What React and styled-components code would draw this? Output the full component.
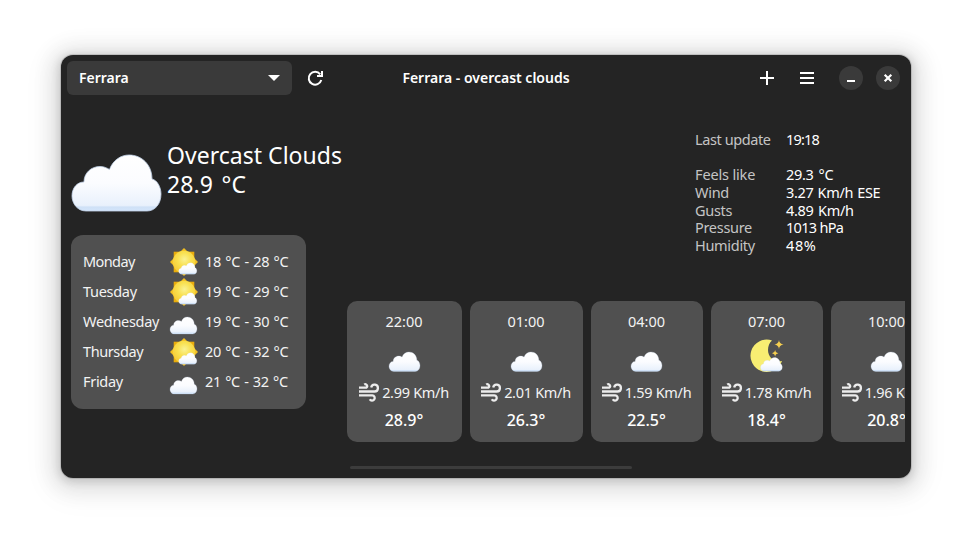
import React, { useId } from "react";
import styled, { createGlobalStyle } from "styled-components";

const GlobalStyle = createGlobalStyle`
  * { box-sizing: border-box; }
  body {
    margin: 0;
    background: #fff;
    font-family: "Noto Sans", "Open Sans", sans-serif;
    font-size: 14.5px;
    color: #fff;
  }
`;

const Desktop = styled.main`
  width: 972px;
  height: 545px;
  padding: 55px 61px 67px;
  overflow: hidden;
`;

const Window = styled.section`
  width: 850px;
  height: 423px;
  border-radius: 12px;
  background: #242424;
  box-shadow: 0 0 0 1px rgba(0, 0, 0, 0.12), 0 2px 8px 2px rgba(0, 0, 0, 0.13),
    0 3px 20px 10px rgba(0, 0, 0, 0.09), 0 6px 30px 14px rgba(0, 0, 0, 0.04);
`;

const Text = styled.span`
  white-space: nowrap;
  letter-spacing: ${(p) => p.$track ?? -0.3}px;
  word-spacing: ${(p) => p.$word ?? 0}px;
`;

const Header = styled.header`
  height: 46px;
  padding: 6px 11px 6px 6px;
  display: grid;
  grid-template-columns: 1fr auto 1fr;
  align-items: center;
  font-weight: 600;
  font-size: 14px;
  span { margin-bottom: 2px; }
`;

const Title = styled(Text)`
  margin-left: 5px;
`;

const HeaderStart = styled.div`
  display: flex;
  align-items: center;
  gap: 15px;
`;

const HeaderEnd = styled.div`
  display: flex;
  align-items: center;
  justify-content: flex-end;
`;

const CityButton = styled.button`
  width: 225px;
  height: 34px;
  padding: 0 12px;
  border: 0;
  border-radius: 6px;
  background: #3a3a3a;
  color: inherit;
  font: inherit;
  display: flex;
  align-items: center;
  justify-content: space-between;
`;

const IconButton = styled.button`
  width: ${(p) => p.$size}px;
  height: ${(p) => p.$size}px;
  margin-left: ${(p) => p.$gap ?? 0}px;
  padding: 0;
  border: 0;
  border-radius: 50%;
  background: ${(p) => (p.$filled ? "#3a3a3a" : "transparent")};
  color: #fff;
  display: grid;
  place-items: center;
`;

const Icon = styled.svg`
  display: block;
  flex: none;
  overflow: visible;
`;

const Body = styled.div`
  height: 377px;
  padding: 0 6px 9px 10px;
  display: flex;
  gap: 41px;
`;

const LeftColumn = styled.div`
  width: 235px;
  flex: none;
`;

const RightColumn = styled.div`
  width: 558px;
  display: flex;
  flex-direction: column;
`;

const Current = styled.div`
  height: 134px;
  padding: 40px 0 0 1px;
  display: flex;
  gap: 6px;
  svg { margin-top: 13.5px; }
`;

const CurrentText = styled.div`
  display: flex;
  flex-direction: column;
  font-size: 23px;
  line-height: 29px;
`;

const DailyCard = styled.div`
  height: 174px;
  padding: 12px;
  border-radius: 12px;
  background: #505050;
  color: #f3f3f3;
`;

const DayRow = styled.div`
  height: 30px;
  display: grid;
  grid-template-columns: 87px 35px 1fr;
  align-items: center;
  span { margin-bottom: 2px; }
`;

const DayIcon = styled.div`
  padding-top: ${(p) => (p.$low ? 7 : 0)}px;
`;

const Details = styled.dl`
  width: 210px;
  height: 200px;
  margin: 0;
  padding-top: 30px;
  align-self: flex-end;
`;

const Detail = styled.div`
  display: grid;
  grid-template-columns: 91px 1fr;
  height: 17.7px;
  line-height: 17.7px;
  margin-bottom: ${(p) => (p.$spaced ? 17.5 : 0)}px;
  dt { color: #c4c4c4; }
  dd { margin: 0; }
`;

const Hours = styled.div`
  display: flex;
  gap: 8px;
  overflow: hidden;
`;

const HourCard = styled.article`
  flex: none;
  width: ${(p) => p.$width}px;
  height: 141px;
  padding: 10px 1px 0 0;
  border-radius: 10px;
  background: #505050;
  color: #f3f3f3;
  display: grid;
  grid-template-rows: 20px 47px 27px 29px;
  place-items: center;
`;

const HourIcon = styled.div`
  padding-top: ${(p) => (p.$low ? 14 : 2)}px;
`;

const WindRow = styled.div`
  display: flex;
  align-items: center;
  gap: 3px;
  svg { margin-top: 1px; }
`;

const HourTemp = styled(Text)`
  font-size: 16px;
  font-weight: 500;
  color: #fff;
`;

const ScrollThumb = styled.div`
  width: 282px;
  height: 3px;
  margin: 24px 0 0 3px;
  border-radius: 2px;
  background: #3c3c3c;
`;

const CLOUD =
  "M14 56 C5 56 0 48 0 41 C0 33 5 27 12 27 C12 18 19 11.5 28 11.5 C32 11.5 35 13 37.5 14.5 C41 5 49 0 57 0 C70 0 80 10 80 24 C85 25 89 32 89 39 C89 49 83 56 75 56 Z";

function CloudShape({ id }) {
  return (
    <>
      <defs>
        <linearGradient id={id} x1="0" y1="0" x2="0" y2="1">
          <stop offset="0" stopColor="#ffffff" />
          <stop offset="0.5" stopColor="#fbfcff" />
          <stop offset="0.9" stopColor="#e9f1fc" />
          <stop offset="0.93" stopColor="#cfe1f7" />
          <stop offset="1" stopColor="#d3e5fa" />
        </linearGradient>
      </defs>
      <path d={CLOUD} fill={`url(#${id})`} stroke="#c3d3ea" strokeWidth="0.8" />
    </>
  );
}

function Cloud({ width }) {
  const id = useId();
  return (
    <Icon width={width} height={(width * 57) / 89} viewBox="0 0 89 57">
      <CloudShape id={id} />
    </Icon>
  );
}

function PartlyCloudy() {
  const id = useId();
  return (
    <Icon width="28" height="28" viewBox="0 0 28 28">
      <defs>
        <radialGradient id={`${id}s`} cx="0.52" cy="0.38" r="0.6">
          <stop offset="0" stopColor="#faf294" />
          <stop offset="0.5" stopColor="#f9e04f" />
          <stop offset="1" stopColor="#f5cc38" />
        </radialGradient>
      </defs>
      <rect x="3.7" y="3.7" width="20.6" height="20.6" fill="#e9ac0c" />
      <path d="M14 0 L28 14 L14 28 L0 14Z" fill="#f3bf20" />
      <circle cx="14" cy="14" r="11.3" fill={`url(#${id}s)`} />
      <g transform="translate(8.7 14.8) scale(.204)">
        <CloudShape id={`${id}c`} />
      </g>
    </Icon>
  );
}

function CloudyNight() {
  const id = useId();
  return (
    <Icon width="34" height="34" viewBox="0 0 34 34">
      <path d="M22 1.4 A16.2 16.2 0 1 0 32 22 C24 24 18 18 18 11 C18 7 19.5 3.5 22 1.4Z" fill="#f8ee72" />
      <path d="M29 1 Q29.3 5 33.5 5.4 Q29.3 6 29 10 Q28.5 6 24.5 5.4 Q28.5 5 29 1Z" fill="#f5cf50" />
      <path d="M25.2 11 Q25.5 13.8 28.4 14.2 Q25.5 14.7 25.2 17.6 Q24.8 14.7 22 14.2 Q24.8 13.8 25.2 11Z" fill="#f5cf50" />
      <g transform="translate(10.5 18.5) scale(.245)">
        <CloudShape id={id} />
      </g>
    </Icon>
  );
}

function WindIcon() {
  return (
    <Icon width="20" height="19" viewBox="0 0 20 19" fill="none" stroke="#ececec" strokeWidth="2.3">
      <path d="M0 4.7 H7.2 A1.8 1.8 0 1 0 5.2 1.5" />
      <path d="M0 8.5 H15.5 A3.4 3.4 0 1 0 12.2 4.4" />
      <path d="M0 12.4 H13.3 A2.6 2.6 0 1 1 10.8 16.2" />
    </Icon>
  );
}

const DAYS = [
  { name: "Monday", track: -0.6, Pic: PartlyCloudy, temps: "18 °C - 28 °C" },
  { name: "Tuesday", Pic: PartlyCloudy, temps: "19 °C - 29 °C" },
  { name: "Wednesday", temps: "19 °C - 30 °C" },
  { name: "Thursday", track: -0.4, Pic: PartlyCloudy, temps: "20 °C - 32 °C" },
  { name: "Friday", temps: "21 °C - 32 °C", tempTrack: -0.35 },
];

const DETAILS = [
  { label: "Last update", labelTrack: -0.4, value: "19:18", track: -0.8, spaced: true },
  { label: "Feels like", labelTrack: -0.15, value: "29.3 °C", word: 1.5 },
  { label: "Wind", value: "3.27 Km/h ESE", word: 0.5 },
  { label: "Gusts", value: "4.89 Km/h", word: 1 },
  { label: "Pressure", value: "1013 hPa", track: -0.7 },
  { label: "Humidity", value: "48%", track: 0.6 },
];

const HOURS = [
  { time: "22:00", wind: "2.99 Km/h", temp: "28.9°", width: 115 },
  { time: "01:00", wind: "2.01 Km/h", temp: "26.3°", width: 113 },
  { time: "04:00", wind: "1.59 Km/h", temp: "22.5°", width: 112 },
  { time: "07:00", wind: "1.78 Km/h", temp: "18.4°", width: 112, night: true },
  { time: "10:00", wind: "1.96 Km/h", temp: "20.8°", width: 112 },
];

export default function App() {
  return (
    <Desktop>
      <GlobalStyle />
      <Window>
        <Header>
          <HeaderStart>
            <CityButton>
              <Text $track={0}>Ferrara</Text>
              <Icon width="12" height="6" viewBox="0 0 12 6">
                <path d="M0 0H12L6 6Z" fill="#fff" />
              </Icon>
            </CityButton>
            <IconButton $size={16} aria-label="Refresh">
              <Icon width="16" height="16" viewBox="0 0 16 16" fill="none" stroke="#fff" strokeWidth="2">
                <path d="M13.2 4.3 A6.4 6.4 0 1 0 14.3 10" />
                <path d="M15 1 V6 H10" />
              </Icon>
            </IconButton>
          </HeaderStart>
          <Title $track={0}>Ferrara - overcast clouds</Title>
          <HeaderEnd>
            <IconButton $size={14} aria-label="Add city">
              <Icon width="14" height="14" viewBox="0 0 14 14">
                <path d="M6 0h2v6h6v2H8v6H6V8H0V6h6z" fill="#fff" />
              </Icon>
            </IconButton>
            <IconButton $size={14} $gap={26} aria-label="Menu">
              <Icon width="14" height="12" viewBox="0 0 14 12">
                <path d="M0 0h14v2H0zM0 5h14v2H0zM0 10h14v2H0z" fill="#fff" />
              </Icon>
            </IconButton>
            <IconButton $size={24} $gap={25} $filled aria-label="Minimize">
              <Icon width="8" height="8" viewBox="0 0 8 8">
                <path d="M0 6h8v2H0z" fill="#fff" />
              </Icon>
            </IconButton>
            <IconButton $size={24} $gap={13} $filled aria-label="Close">
              <Icon width="8" height="8" viewBox="0 0 8 8">
                <path d="M.7 .7L7.3 7.3M7.3 .7L.7 7.3" stroke="#fff" strokeWidth="2.2" />
              </Icon>
            </IconButton>
          </HeaderEnd>
        </Header>
        <Body>
          <LeftColumn>
            <Current>
              <Cloud width={89} />
              <CurrentText>
                <Text $track={0.02}>Overcast Clouds</Text>
                <Text $track={0.1} $word={2.5}>28.9 °C</Text>
              </CurrentText>
            </Current>
            <DailyCard>
              {DAYS.map(({ name, track, Pic, temps, tempTrack }) => (
                <DayRow key={name}>
                  <Text $track={track}>{name}</Text>
                  <DayIcon $low={!Pic}>{Pic ? <Pic /> : <Cloud width={27} />}</DayIcon>
                  <Text $track={tempTrack} $word={0.9}>{temps}</Text>
                </DayRow>
              ))}
            </DailyCard>
          </LeftColumn>
          <RightColumn>
            <Details>
              {DETAILS.map((d) => (
                <Detail key={d.label} $spaced={d.spaced}>
                  <Text as="dt" $track={d.labelTrack}>{d.label}</Text>
                  <Text as="dd" $track={d.track} $word={d.word}>{d.value}</Text>
                </Detail>
              ))}
            </Details>
            <Hours>
              {HOURS.map((h) => (
                <HourCard key={h.time} $width={h.width}>
                  <Text $track={0}>{h.time}</Text>
                  <HourIcon $low={!h.night}>{h.night ? <CloudyNight /> : <Cloud width={31} />}</HourIcon>
                  <WindRow>
                    <WindIcon />
                    <Text>{h.wind}</Text>
                  </WindRow>
                  <HourTemp $track={0}>{h.temp}</HourTemp>
                </HourCard>
              ))}
            </Hours>
            <ScrollThumb />
          </RightColumn>
        </Body>
      </Window>
    </Desktop>
  );
}
